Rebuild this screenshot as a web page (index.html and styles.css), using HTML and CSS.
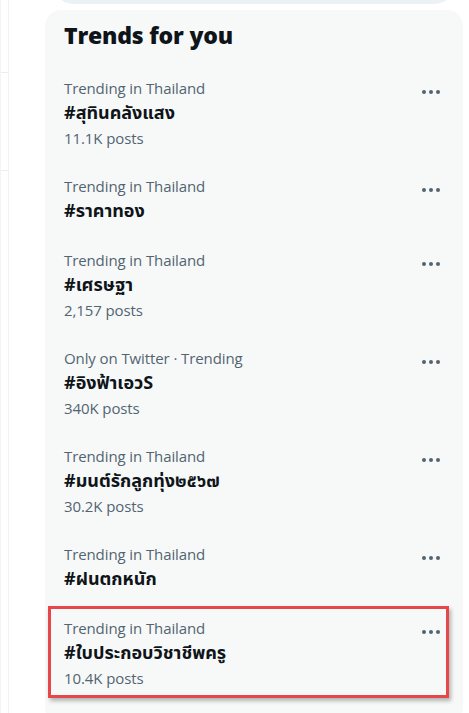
FILE: index.html
```html
<!DOCTYPE html>
<html lang="th">
<head>
<meta charset="utf-8">
<title>Trends for you</title>
<link rel="stylesheet" href="styles.css">
</head>
<body>
<div class="page">
  <div class="rail">
    <div class="rail-seg rail-seg-1"></div>
    <div class="rail-seg rail-seg-2"></div>
  </div>
  <div class="side">
    <div class="search"></div>
    <section class="card">
      <h2 class="title">Trends for you</h2>

      <div class="trend">
        <div class="trend-text">
          <div class="meta">Trending in Thailand</div>
          <div class="tag">#สุทินคลังแสง</div>
          <div class="count">11.1K posts</div>
        </div>
        <div class="more"><span></span><span></span><span></span></div>
      </div>

      <div class="trend">
        <div class="trend-text">
          <div class="meta">Trending in Thailand</div>
          <div class="tag">#ราคาทอง</div>
        </div>
        <div class="more"><span></span><span></span><span></span></div>
      </div>

      <div class="trend">
        <div class="trend-text">
          <div class="meta">Trending in Thailand</div>
          <div class="tag">#เศรษฐา</div>
          <div class="count">2,157 posts</div>
        </div>
        <div class="more"><span></span><span></span><span></span></div>
      </div>

      <div class="trend">
        <div class="trend-text">
          <div class="meta">Only on Twitter · Trending</div>
          <div class="tag">#อิงฟ้าเอวS</div>
          <div class="count">340K posts</div>
        </div>
        <div class="more"><span></span><span></span><span></span></div>
      </div>

      <div class="trend">
        <div class="trend-text">
          <div class="meta">Trending in Thailand</div>
          <div class="tag">#มนต์รักลูกทุ่ง๒๕๖๗</div>
          <div class="count">30.2K posts</div>
        </div>
        <div class="more"><span></span><span></span><span></span></div>
      </div>

      <div class="trend">
        <div class="trend-text">
          <div class="meta">Trending in Thailand</div>
          <div class="tag">#ฝนตกหนัก</div>
        </div>
        <div class="more"><span></span><span></span><span></span></div>
      </div>

      <div class="trend trend-marked">
        <div class="trend-text">
          <div class="meta">Trending in Thailand</div>
          <div class="tag">#ใบประกอบวิชาชีพครู</div>
          <div class="count">10.4K posts</div>
        </div>
        <div class="more"><span></span><span></span><span></span></div>
        <div class="highlight"></div>
      </div>
    </section>
  </div>
</div>
</body>
</html>
```

FILE: styles.css
```css
* { box-sizing: border-box; }

html, body {
  margin: 0;
  padding: 0;
  background: #ffffff;
  height: 713px;
  overflow: hidden;
}

body {
  font-family: "Open Sans", "Noto Sans", "Noto Sans Thai", "Loma", "Garuda", "Tlwg Typo", sans-serif;
  color: #0f1419;
}

.page {
  display: flex;
  align-items: flex-start;
  height: 713px;
}

.rail {
  width: 9px;
  height: 713px;
  flex: none;
  border-right: 1px solid #eff3f4;
  border-left: 1px solid #f2f4f5;
}

.rail-seg {
  border-bottom: 1px solid #eaeef0;
}

.rail-seg-1 { height: 73px; }
.rail-seg-2 { height: 98px; }

.side {
  flex: none;
  margin-left: 36px;
  width: 418px;
}

.search {
  margin: -40px 7px 0;
  height: 44px;
  border-radius: 22px;
  background: #ebf1f4;
}

.card {
  margin-top: 6px;
  background: #f7f9f9;
  border-radius: 16px;
  padding-bottom: 20px;
}

.title {
  margin: 0;
  height: 55px;
  padding: 10px 19px 0;
  font-size: 23px;
  line-height: 30px;
  font-weight: 800;
  letter-spacing: -0.2px;
  color: #0f1419;
}

.trend {
  position: relative;
  display: flex;
  justify-content: space-between;
  padding: 13px 23px 13px 19px;
}

.meta {
  font-size: 15px;
  line-height: 20px;
  color: #536471;
  letter-spacing: -0.1px;
}

.tag {
  font-size: 18px;
  line-height: 28px;
  font-weight: 700;
  color: #0f1419;
}

.count {
  font-size: 15px;
  line-height: 24px;
  color: #536471;
  letter-spacing: -0.1px;
}

.more {
  display: flex;
  gap: 3px;
  height: 4px;
  margin-top: 12px;
}

.more span {
  width: 4px;
  height: 4px;
  border-radius: 50%;
  background: #536471;
}

.highlight {
  position: absolute;
  left: 3px;
  top: 1px;
  width: 401px;
  height: 92px;
  border: 3px solid #e5474b;
  box-shadow: 2px 3px 4px rgba(0, 0, 0, 0.28);
  pointer-events: none;
}
```
